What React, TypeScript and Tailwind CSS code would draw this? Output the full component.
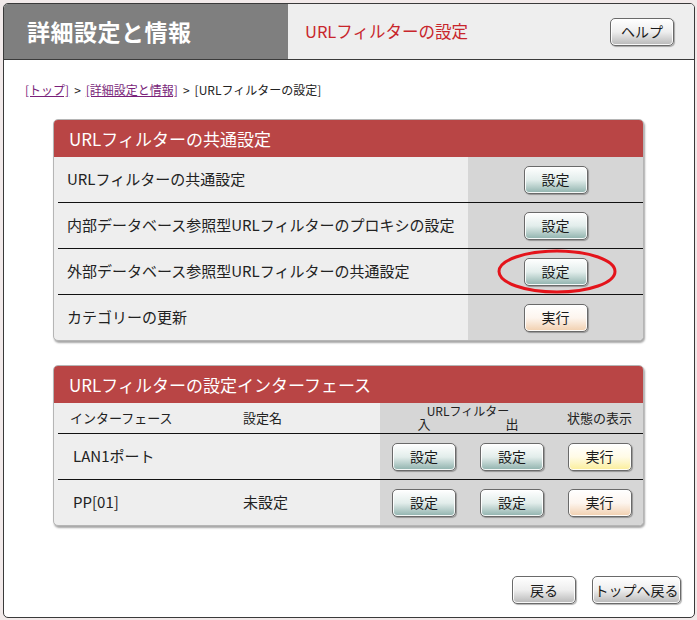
import React from "react";

const font = { fontFamily: '"Noto Sans CJK JP", "Noto Sans", sans-serif' };

type Kind = "teal" | "gray" | "peach" | "yellow";

function Btn({ label, kind, w = "w-[64px]" }: { label: string; kind: Kind; w?: string }) {
  const grad =
    kind === "teal"
      ? "bg-linear-to-b from-[#ffffff] via-[#e2edeb] to-[#8fb2ad]"
      : kind === "gray"
      ? "bg-linear-to-b from-[#ffffff] via-[#eeeeee] to-[#b8b8b8]"
      : kind === "peach"
      ? "bg-linear-to-b from-[#ffffff] via-[#fdf5ee] to-[#f1cfae]"
      : "bg-linear-to-b from-[#ffffff] via-[#fffbe6] to-[#fbee98]";
  return (
    <div
      className={`${w} h-[28px] rounded-[5px] border border-[#6a6a6a] ${grad} flex items-center justify-center text-[14px] text-[#1a1a1a] shadow-[inset_0_0_0_1px_rgba(255,255,255,0.9),1px_1px_1px_rgba(0,0,0,0.3)]`}
    >
      {label}
    </div>
  );
}

function Sep() {
  return <div className="h-px bg-[#111] ml-[4px]" />;
}

export default function App() {
  return (
    <div className="w-[697px] h-[620px] bg-[#f2eaea] pt-[3px] pl-[3px]" style={font}>
      <div className="w-[692px] h-[615px] bg-white border border-[#3a3a3a] rounded-[5px] overflow-hidden flex flex-col">
        {/* header */}
        <div className="flex h-[56px] border-b border-[#3a3a3a] shrink-0">
          <div className="w-[284px] bg-[#7f7f7f] flex items-center pl-[23px] text-white text-[23px] font-bold tracking-[0.5px]">
            詳細設定と情報
          </div>
          <div className="flex-1 bg-[#eeeeee] flex items-center justify-between pl-[17px] pr-[20px]">
            <span className="text-[16.5px] text-[#c8252b]">URLフィルターの設定</span>
            <Btn label="ヘルプ" kind="gray" />
          </div>
        </div>

        {/* breadcrumb */}
        <div className="pt-[22px] pl-[21px] text-[12px] leading-[16px] text-[#222] flex">
          <span className="text-[#7a1f7a] underline">[トップ]</span>
          <span className="mx-[5px]">&gt;</span>
          <span className="text-[#7a1f7a] underline">[詳細設定と情報]</span>
          <span className="mx-[5px]">&gt;</span>
          <span>[URLフィルターの設定]</span>
        </div>

        {/* card 1 */}
        <div className="ml-[49px] mt-[21px] w-[591px] border border-[#b5b5b5] rounded-[5px] shadow-[1px_2px_2px_rgba(0,0,0,0.35)] bg-[#eeeeee] overflow-hidden">
          <div className="h-[37px] bg-[#b94545] text-white text-[17px] pl-[15px] flex items-center">
            URLフィルターの共通設定
          </div>
          {[
            { t: "URLフィルターの共通設定", b: "設定", k: "teal" as Kind },
            { t: "内部データベース参照型URLフィルターのプロキシの設定", b: "設定", k: "teal" as Kind },
            { t: "外部データベース参照型URLフィルターの共通設定", b: "設定", k: "teal" as Kind, mark: true },
            { t: "カテゴリーの更新", b: "実行", k: "peach" as Kind },
          ].map((r, i) => (
            <React.Fragment key={i}>
              {i > 0 && <Sep />}
              <div className="flex h-[45px]">
                <div className="flex-1 flex items-center pl-[13px] text-[15px] text-[#222]">{r.t}</div>
                <div className="w-[175px] bg-[#d6d6d6] flex items-center justify-center relative">
                  <Btn label={r.b} kind={r.k} />
                  {r.mark && (
                    <svg className="absolute left-[29px] top-[0px]" width="120" height="45" viewBox="0 0 120 45">
                      <ellipse cx="60" cy="22.5" rx="58" ry="20.5" fill="none" stroke="#e4141b" strokeWidth="3" />
                    </svg>
                  )}
                </div>
              </div>
            </React.Fragment>
          ))}
        </div>

        {/* card 2 */}
        <div className="ml-[49px] mt-[24px] w-[591px] border border-[#b5b5b5] rounded-[5px] shadow-[1px_2px_2px_rgba(0,0,0,0.35)] bg-[#eeeeee] overflow-hidden">
          <div className="h-[37px] bg-[#b94545] text-white text-[17px] pl-[15px] flex items-center">
            URLフィルターの設定インターフェース
          </div>
          <div className="flex h-[30px] text-[13px] text-[#222]">
            <div className="w-[189px] pl-[16px] pt-[5px]">インターフェース</div>
            <div className="w-[137px] pt-[5px]">設定名</div>
            <div className="flex-1 bg-[#d6d6d6] flex">
              <div className="w-[176px] relative">
                <div className="absolute left-0 right-0 top-[1px] text-center text-[12px] leading-[14px]">URLフィルター</div>
                <div className="absolute left-0 w-[88px] top-[13px] text-center text-[13px] leading-[16px]">入</div>
                <div className="absolute left-[88px] w-[88px] top-[13px] text-center text-[13px] leading-[16px]">出</div>
              </div>
              <div className="flex-1 text-center pt-[5px]">状態の表示</div>
            </div>
          </div>
          {[
            { a: "LAN1ポート", n: "", k: "yellow" as Kind },
            { a: "PP[01]", n: "未設定", k: "peach" as Kind },
          ].map((r, i) => (
            <React.Fragment key={i}>
              <Sep />
              <div className="flex h-[45px] text-[15px] text-[#222]">
                <div className="w-[189px] pl-[19px] flex items-center">{r.a}</div>
                <div className="w-[137px] flex items-center">{r.n}</div>
                <div className="flex-1 bg-[#d6d6d6] flex">
                  <div className="w-[88px] flex items-center justify-center">
                    <Btn label="設定" kind="teal" />
                  </div>
                  <div className="w-[88px] flex items-center justify-center">
                    <Btn label="設定" kind="teal" />
                  </div>
                  <div className="flex-1 flex items-center justify-center">
                    <Btn label="実行" kind={r.k} />
                  </div>
                </div>
              </div>
            </React.Fragment>
          ))}
        </div>

        {/* bottom buttons */}
        <div className="flex justify-end gap-[16px] pr-[13px] mt-[50px]">
          <Btn label="戻る" kind="gray" />
          <Btn label="トップへ戻る" kind="gray" w="w-[89px]" />
        </div>
      </div>
    </div>
  );
}
